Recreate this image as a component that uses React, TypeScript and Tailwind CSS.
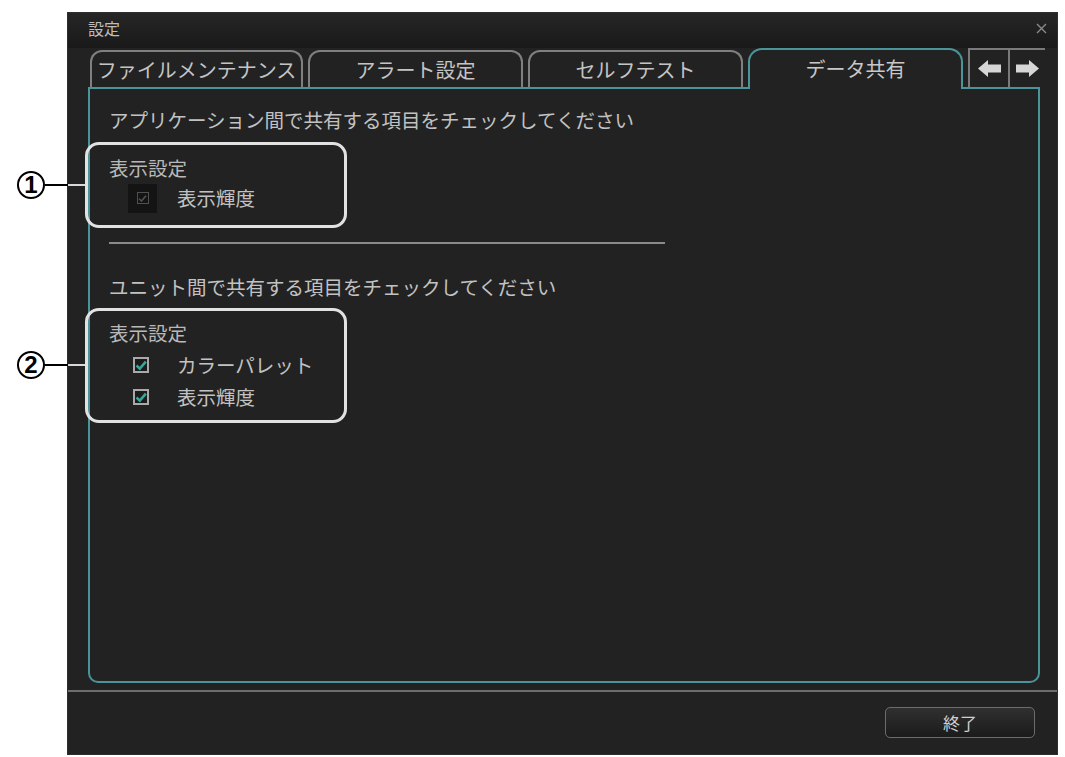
import React from "react";

const JP = "font-['Noto_Sans_CJK_JP','Noto_Sans',sans-serif]";

const tabs = [
  { label: "ファイルメンテナンス", w: "w-[213px]" },
  { label: "アラート設定", w: "w-[215px]" },
  { label: "セルフテスト", w: "w-[215px]" },
];

const CheckBox = () => (
  <span className="ml-[5px] flex h-[16px] w-[16px] items-center justify-center border-2 border-[#a9a9a9] bg-[#1b1b1b]">
    <svg width="12" height="12" viewBox="0 0 12 12">
      <path d="M1.5 6.5 L4.8 9.6 L10.8 2.6" fill="none" stroke="#3aa596" strokeWidth="2.6" />
    </svg>
  </span>
);

const DisabledCheckBox = () => (
  <span className="flex h-[29px] w-[29px] items-center justify-center bg-[#141414]">
    <span className="flex h-[12px] w-[12px] items-center justify-center border border-[#505050]">
      <svg width="9" height="9" viewBox="0 0 9 9">
        <path d="M1 4.8 L3.5 7 L8 1.8" fill="none" stroke="#555555" strokeWidth="1.5" />
      </svg>
    </span>
  </span>
);

const Row = ({ label, disabled }: { label: string; disabled?: boolean }) => (
  <div className="flex h-[32px] items-center pl-[19px]">
    <div className="flex w-[49px] items-center">{disabled ? <DisabledCheckBox /> : <CheckBox />}</div>
    <span className="leading-[26px]">{label}</span>
  </div>
);

const Callout = ({ n, top }: { n: string; top: string }) => (
  <div className={`absolute left-[17px] flex items-center ${top}`}>
    <div className="flex h-[28px] w-[28px] items-center justify-center rounded-full border-[2.5px] border-black bg-white font-['Liberation_Sans_Narrow','Liberation_Sans',sans-serif] text-[24px] font-bold leading-none text-black">
      {n}
    </div>
    <div className="h-[1.5px] w-[23px] bg-black" />
    <div className="h-[1.5px] w-[17px] bg-[#d8d8d8]" />
  </div>
);

const ArrowLeft = () => (
  <svg width="23" height="17" viewBox="0 0 23 17">
    <path d="M0 8.5 L10 0 L10 4.5 L23 4.5 L23 12.5 L10 12.5 L10 17 Z" fill="#d6d6d6" />
  </svg>
);

const ArrowRight = () => (
  <svg width="23" height="17" viewBox="0 0 23 17">
    <path d="M23 8.5 L13 0 L13 4.5 L0 4.5 L0 12.5 L13 12.5 L13 17 Z" fill="#d6d6d6" />
  </svg>
);

export default function App() {
  return (
    <div className={`relative h-[757px] w-[1065px] overflow-hidden bg-white pl-[67px] pt-[12px] ${JP}`}>
      <div className="flex h-[743px] w-[991px] flex-col border border-[#2e2e2e] bg-[#222222] text-[#c2c2c2]">
        {/* title bar */}
        <div className="relative h-[35px] bg-gradient-to-b from-[#262626] to-[#191919] pl-[20px] pt-[3px]">
          <span className="text-[16px] leading-[20px] text-[#bdbdbd]">設定</span>
          <svg className="absolute right-[10px] top-[10px]" width="11" height="11" viewBox="0 0 11 11">
            <path d="M1 1 L10 10 M10 1 L1 10" stroke="#8a8a8a" strokeWidth="1.4" />
          </svg>
        </div>

        {/* tabs + panel */}
        <div className="ml-[20px] flex h-[635px] w-[952px] flex-col">
          <div className="flex h-[41px] shrink-0 items-end gap-[5px] border-b-2 border-[#4a9599] pl-[2px]">
            {tabs.map((t) => (
              <div
                key={t.label}
                className={`flex h-[37px] shrink-0 items-center justify-center rounded-t-[12px] border-2 border-b-0 border-[#808080] text-[20px] text-[#c4c4c4] ${t.w}`}
              >
                {t.label}
              </div>
            ))}
            <div className="relative z-10 -mb-[2px] flex h-[41px] w-[215px] shrink-0 items-center justify-center rounded-t-[14px] border-2 border-b-0 border-[#4a9599] bg-[#222222] pb-[2px] text-[20px] text-[#c8c8c8]">
              データ共有
            </div>
            <div className="flex h-[39px] shrink-0 border-t-2 border-[#7a7a7a]">
              <div className="flex w-[40px] items-center justify-center border-l-2 border-[#7a7a7a]">
                <ArrowLeft />
              </div>
              <div className="flex w-[37px] items-center justify-center border-l-2 border-[#7a7a7a]">
                <ArrowRight />
              </div>
            </div>
          </div>

          <div className="flex-1 rounded-b-[10px] border-2 border-t-0 border-[#4a9599] pl-[19px] pt-[18px] text-[19.5px]">
            <div className="leading-[26px]">アプリケーション間で共有する項目をチェックしてください</div>

            <div className="relative mt-[22px]">
              <div className="pointer-events-none absolute -bottom-[14px] -left-[24px] -top-[13px] w-[262px] rounded-[14px] border-[3px] border-[#e2e2e2]" />
              <div className="h-[26px] leading-[26px] text-[#b8b8b8]">表示設定</div>
              <div className="mt-[1px]">
                <Row label="表示輝度" disabled />
              </div>
            </div>

            <div className="mt-[28px] h-[2px] w-[556px] bg-[#8a8a8a]" />

            <div className="mt-[30px] leading-[26px]">ユニット間で共有する項目をチェックしてください</div>

            <div className="relative mt-[20px]">
              <div className="pointer-events-none absolute -bottom-[10px] -left-[24px] -top-[12px] w-[262px] rounded-[14px] border-[3px] border-[#e2e2e2]" />
              <div className="h-[26px] leading-[26px] text-[#b8b8b8]">表示設定</div>
              <div className="mt-[3px]">
                <Row label="カラーパレット" />
                <Row label="表示輝度" />
              </div>
            </div>
          </div>
        </div>

        <div className="mt-[7px] h-[2px] bg-[#6e6e6e]" />

        {/* footer */}
        <div className="flex flex-1 justify-end pr-[22px] pt-[15px]">
          <button className="h-[31px] w-[150px] rounded-[5px] border border-[#6c6c6c] bg-gradient-to-b from-[#303030] to-[#1b1b1b] text-[17px] text-[#d0d0d0]">
            終了
          </button>
        </div>
      </div>

      <Callout n="1" top="top-[171px]" />
      <Callout n="2" top="top-[351px]" />
    </div>
  );
}
